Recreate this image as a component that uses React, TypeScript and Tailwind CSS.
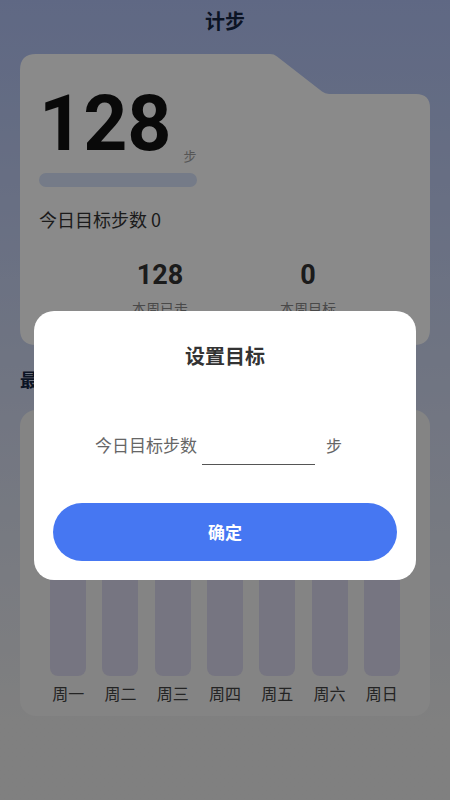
import React from "react";

const WEEK = ["周一", "周二", "周三", "周四", "周五", "周六", "周日"];

const CardShape: React.FC = () => (
  <svg
    className="absolute inset-0 h-full w-full"
    viewBox="0 0 410 291"
    preserveAspectRatio="none"
  >
    <path
      d="M16 0 H250 Q254 0 257 2.4 L302 37.6 Q305 40 309 40 H396 Q410 40 410 54 V275 Q410 291 394 291 H16 Q0 291 0 275 V16 Q0 0 16 0 Z"
      fill="#ffffff"
    />
  </svg>
);

const StepCard: React.FC = () => (
  <div className="relative mx-5 h-[291px]">
    <CardShape />
    <div className="relative px-[19px] pt-[32px]">
      <div className="flex items-end">
        <span className="font-['Roboto',sans-serif] text-[77px] font-bold leading-none text-[#111111]">
          128
        </span>
        <span className="mb-[1px] ml-[12px] text-[13px] leading-none text-[#a0a0a0]">步</span>
      </div>
      <div className="mt-[10px] h-[14px] w-[158px] rounded-full bg-[#d8e4fb]" />
      <div className="mt-[19px] text-[18px] leading-[26px] text-[#333333]">今日目标步数 0</div>
      <div className="ml-[47px] mt-[26px] flex">
        <div className="flex w-[148px] flex-col items-center">
          <span className="font-['Roboto',sans-serif] text-[27px] font-bold leading-[34px] text-[#333333]">
            128
          </span>
          <span className="mt-[6px] text-[14px] leading-[20px] text-[#888888]">本周已走</span>
        </div>
        <div className="flex w-[148px] flex-col items-center">
          <span className="font-['Roboto',sans-serif] text-[27px] font-bold leading-[34px] text-[#333333]">
            0
          </span>
          <span className="mt-[6px] text-[14px] leading-[20px] text-[#888888]">本周目标</span>
        </div>
      </div>
    </div>
  </div>
);

const WeekChart: React.FC = () => (
  <div className="mx-5 mt-[19px] rounded-2xl bg-[#f4f4f4] px-[22px] pb-[12px] pt-[20px]">
    <div className="grid grid-cols-7">
      {WEEK.map((d) => (
        <div key={d} className="flex flex-col items-center">
          <div className="h-[246px] w-9 rounded-b-lg bg-[#dad8ee]" />
          <span className="mt-[6px] text-[16px] leading-[22px] text-[#444444]">{d}</span>
        </div>
      ))}
    </div>
  </div>
);

const GoalDialog: React.FC = () => (
  <div className="absolute inset-0 bg-black/[0.46]">
    <div className="mx-[34px] mt-[311px] rounded-[20px] bg-white px-[19px] pb-[19px] pt-[31px]">
      <div className="text-center text-[20px] font-bold leading-[28px] text-[#333333]">设置目标</div>
      <div className="mt-[55px] flex items-center pl-[42px]">
        <span className="text-[17px] leading-[24px] text-[#666666]">今日目标步数</span>
        <input
          className="ml-[5px] h-[40px] w-[113px] border-b-[1.5px] border-[#555555] bg-transparent text-[17px] outline-none"
          defaultValue=""
        />
        <span className="ml-[11px] text-[16px] leading-[24px] text-[#666666]">步</span>
      </div>
      <button className="mt-[38px] flex h-[58px] w-full items-center justify-center rounded-full bg-[#4677f2] text-[17px] font-bold text-white">
        确定
      </button>
    </div>
  </div>
);

export default function App() {
  return (
    <div className="relative h-[800px] w-full overflow-hidden bg-gradient-to-b from-[#b0c1f4] to-[#ececec] to-[90%] font-['Noto_Sans_CJK_SC','Noto_Sans',sans-serif]">
      <div className="flex h-[42px] items-center justify-center text-[20px] font-bold text-[#162543]">
        计步
      </div>
      <div className="mt-[12px]">
        <StepCard />
      </div>
      <div className="mx-5 mt-[22px] text-[18px] font-bold leading-[24px] text-[#162543]">最近一周</div>
      <WeekChart />
      <GoalDialog />
    </div>
  );
}
